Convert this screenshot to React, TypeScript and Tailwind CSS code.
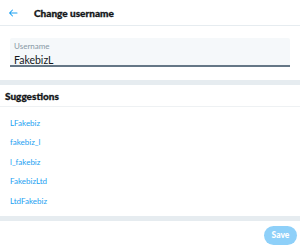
const suggestions = ['LFakebiz', 'fakebiz_l', 'l_fakebiz', 'FakebizLtd', 'LtdFakebiz'];

export default function App() {
  return (
    <div className="w-[300px] h-[252px] bg-white flex flex-col overflow-hidden font-['Lato',sans-serif]">
      <div className="h-[26px] shrink-0 flex items-center border-b border-[#e6ecf0]">
        <svg className="ml-[7px] mt-[1px] w-[12px] h-[12px] text-[#1da1f2]" viewBox="0 0 24 24" fill="currentColor">
          <path d="M20 11H7.414l4.293-4.293a1 1 0 0 0-1.414-1.414l-6 6a1 1 0 0 0 0 1.414l6 6a1 1 0 0 0 1.414-1.414L7.414 13H20a1 1 0 1 0 0-2z" />
        </svg>
        <span className="ml-[15px] text-[10px] font-black text-[#14171a] leading-none [-webkit-text-stroke:0.3px_#14171a]">Change username</span>
      </div>

      <div className="px-[10px] pt-[12px] pb-[13px] shrink-0">
        <div className="h-[29px] bg-[#f5f8fa] rounded-t-[2px] border-b-2 border-[#657786] px-[4px] pt-[3px] flex flex-col">
          <span className="text-[8px] leading-[10px] text-[#8899a6]">Username</span>
          <span className="mt-[3px] text-[10.5px] leading-[12px] text-[#14171a]">FakebizL</span>
        </div>
      </div>

      <div className="h-[5px] shrink-0 bg-[#e6ecf0]" />

      <div className="h-[22px] shrink-0 flex items-center px-[5px] border-b border-[#eef1f3]">
        <span className="text-[10px] font-black text-[#14171a] leading-none [-webkit-text-stroke:0.3px_#14171a]">Suggestions</span>
      </div>

      <div className="pt-[6px] pb-[5px] flex flex-col shrink-0">
        {suggestions.map((s) => (
          <div key={s} className="h-[19.5px] flex items-center px-[10px] text-[8px] text-[#1da1f2]">
            {s}
          </div>
        ))}
      </div>

      <div className="h-[5px] shrink-0 bg-[#e6ecf0]" />

      <div className="flex justify-end pt-[5px] pr-[3px]">
        <button className="w-[33px] h-[19px] rounded-full bg-[#8ed0f9] text-white text-[8.5px] font-black leading-none">
          Save
        </button>
      </div>
    </div>
  );
}
